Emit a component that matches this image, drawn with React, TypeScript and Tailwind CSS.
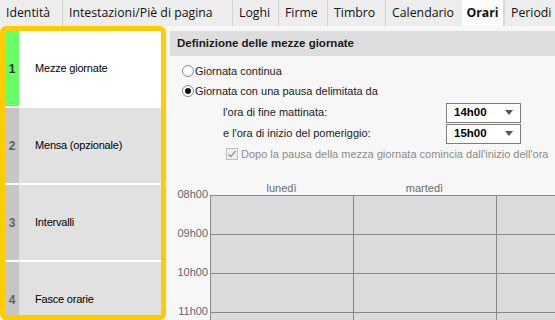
import { ReactNode } from 'react'

const tabs = [
  { label: 'Identità', w: 'w-[62px]' },
  { label: 'Intestazioni/Piè di pagina', w: 'w-[170px]' },
  { label: 'Loghi', w: 'w-[46px]' },
  { label: 'Firme', w: 'w-[49px]' },
  { label: 'Timbro', w: 'w-[58px]' },
  { label: 'Calendario', w: 'w-[77px]' },
  { label: 'Orari', w: 'w-[41px]', active: true },
  { label: 'Periodi', w: 'flex-1' },
]

const steps = [
  { n: 1, label: 'Mezze giornate', active: true },
  { n: 2, label: 'Mensa (opzionale)' },
  { n: 3, label: 'Intervalli' },
  { n: 4, label: 'Fasce orarie' },
]

const hours = ['08h00', '09h00', '10h00', '11h00']

function Radio({ checked, children }: { checked?: boolean; children: ReactNode }) {
  return (
    <div className="flex items-center h-[20px] shrink-0">
      <span className="w-[12px] h-[12px] rounded-full border border-[#8a8a8a] bg-white flex items-center justify-center">
        {checked && <span className="w-[6px] h-[6px] rounded-full bg-[#111]" />}
      </span>
      <span className="ml-[1px]">{children}</span>
    </div>
  )
}

function TimeSelect({ value }: { value: string }) {
  return (
    <div className="w-[75px] h-[20px] border border-[#7d7d7d] bg-white flex items-center justify-between pl-[7px] pr-[7px]">
      <span className="font-bold text-[11.5px] text-black">{value}</span>
      <svg width="8" height="5" viewBox="0 0 8 5">
        <path d="M0 0h8L4 5z" fill="#555" />
      </svg>
    </div>
  )
}

export default function App() {
  return (
    <div className="w-[555px] h-[320px] overflow-hidden bg-[#f7f7f7] flex flex-col font-['Liberation_Sans',Arial,sans-serif] text-[11px] text-[#222]">
      {/* tab bar */}
      <div className="h-[26px] shrink-0 flex bg-[#ededed] font-['Open_Sans',sans-serif] text-[12.3px] text-[#111]">
        {tabs.map((t, i) => (
          <div
            key={t.label}
            className={[
              'flex items-center whitespace-nowrap overflow-hidden',
              t.w,
              t.active ? 'bg-white font-bold justify-center' : 'pl-[6px]',
              i > 0 && !t.active && !tabs[i - 1].active ? 'border-l border-[#d2d2d2]' : '',
              tabs[i - 1]?.active ? 'border-l-2 border-[#dadada]' : '',
            ].join(' ')}
          >
            {t.label}
          </div>
        ))}
      </div>

      <div className="flex flex-1 min-h-0">
        {/* steps */}
        <div className="w-[166px] shrink-0 border-[5px] border-[#ffcc00] rounded-[6px] overflow-hidden bg-white flex flex-col gap-[2px]">
          {steps.map(s => (
            <div key={s.n} className={`h-[75px] shrink-0 flex items-center ${s.active ? 'bg-white' : 'bg-[#e1e1e1]'}`}>
              <div className={`w-[14px] h-full flex items-center justify-center font-bold text-[12px] ${s.active ? 'bg-[#66ff66] text-[#333]' : 'bg-[#c6c6c6] text-[#5a6470]'}`}>
                {s.n}
              </div>
              <span className="ml-[16px] text-[11px] text-black tracking-[-0.2px]">{s.label}</span>
            </div>
          ))}
        </div>

        {/* content */}
        <div className="flex-1 min-w-0 pl-[4px] pt-[5px] flex flex-col">
          <div className="h-[25px] shrink-0 bg-[#dddddd] flex items-center pl-[7px] font-bold text-[11.5px] text-[#1a1a1a]">
            Definizione delle mezze giornate
          </div>

          <div className="pl-[12px] pt-[5px] flex flex-col shrink-0">
            <Radio>Giornata continua</Radio>
            <Radio checked>Giornata con una pausa delimitata da</Radio>

            <div className="flex items-center justify-between w-[339px] pl-[41px] mt-[1px] h-[21px] shrink-0">
              <span>l'ora di fine mattinata:</span>
              <TimeSelect value="14h00" />
            </div>
            <div className="flex items-center justify-between w-[339px] pl-[41px] h-[21px] shrink-0">
              <span>e l'ora di inizio del pomeriggio:</span>
              <TimeSelect value="15h00" />
            </div>
            <div className="flex items-center pl-[44px] h-[20px] shrink-0 text-[#8c8c8c] whitespace-nowrap">
              <span className="w-[12px] h-[12px] border border-[#bdbdbd] bg-[#f0f0f0] flex items-center justify-center">
                <svg width="10" height="10" viewBox="0 0 10 10">
                  <path d="M1.5 5.2l2.3 2.3L8.6 2" fill="none" stroke="#a0a0a0" strokeWidth="1.6" />
                </svg>
              </span>
              <span className="ml-[3px]">Dopo la pausa della mezza giornata comincia dall'inizio dell'ora</span>
            </div>
          </div>

          {/* week grid */}
          <div className="flex mt-[17px] shrink-0">
            <div className="w-[40px] shrink-0 flex flex-col items-end pr-[2px] pt-[7px] text-[#5f6670]">
              {hours.map(h => (
                <div key={h} className="h-[39px] leading-[13px]">{h}</div>
              ))}
            </div>
            <div className="flex-1 flex flex-col">
              <div className="flex h-[14px] leading-[14px] text-[#6c6c6c]">
                <div className="w-[143px] text-center">lunedì</div>
                <div className="w-[143px] text-center">martedì</div>
              </div>
              <div className="grid grid-cols-[143px_143px_143px] grid-rows-[39px_39px_39px_39px] bg-[#dbdbdd] border-t border-l border-[#8a8a8a]">
                {Array.from({ length: 12 }).map((_, i) => (
                  <div key={i} className="border-r border-b border-[#8a8a8a]" />
                ))}
              </div>
            </div>
          </div>
        </div>
      </div>
    </div>
  )
}
